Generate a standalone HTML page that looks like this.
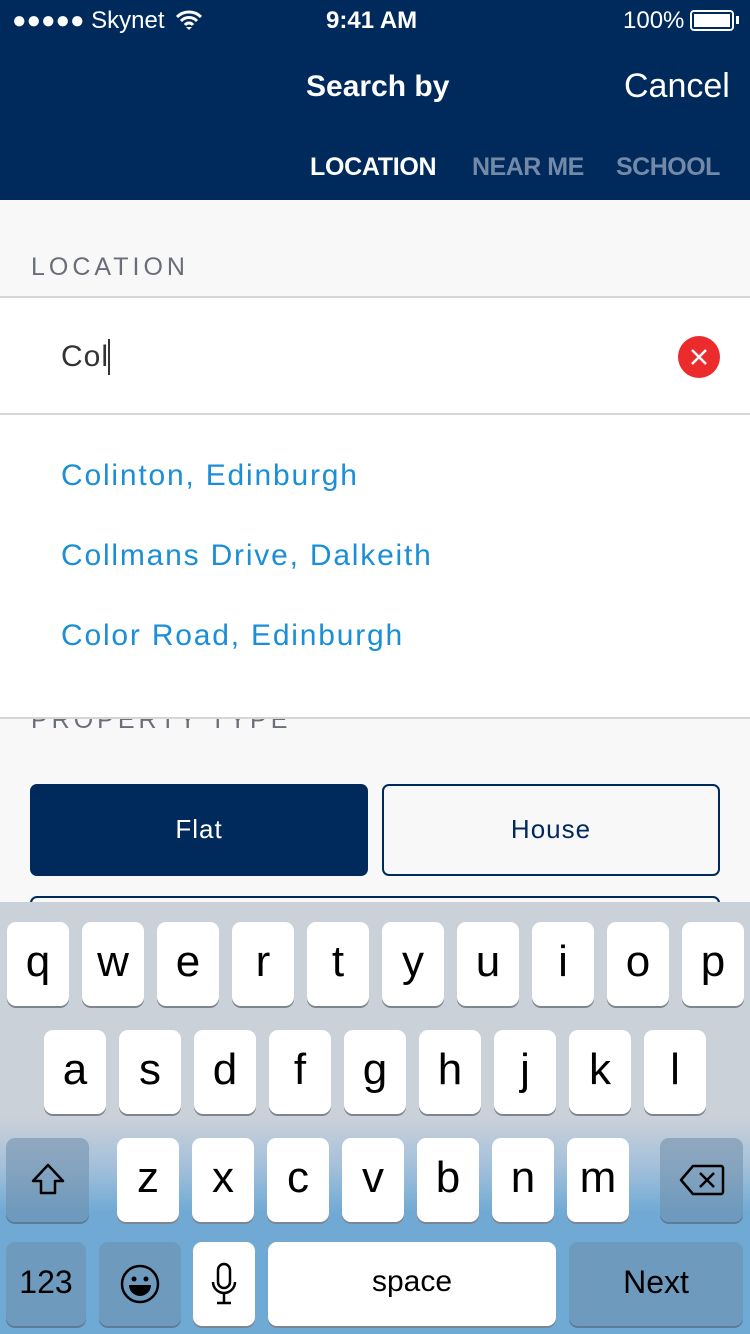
<!DOCTYPE html>
<html><head><meta charset="utf-8"><style>
*{margin:0;padding:0;box-sizing:border-box}
body{width:750px;height:1334px;overflow:hidden;position:relative;background:#f8f8f8;font-family:"Liberation Sans",sans-serif}
.a{position:absolute;white-space:nowrap}
.hdr{left:0;top:0;width:750px;height:200px;background:#012a5c}
.w{color:#fff}
.sug{color:#1b8ed8;font-size:30px;letter-spacing:1.8px;left:61px}
.kb{left:0;top:902px;width:750px;height:432px;background:linear-gradient(#cbd1d9 0,#cbd1d9 215px,#a3c0da 265px,#70aad4 310px,#6eaad4 432px)}
.k{position:absolute;width:62px;height:84px;background:#fff;border-radius:9px;box-shadow:0 2px 0 #7f8590;text-align:center;font-size:44px;line-height:80px;color:#000}
.d{background:rgba(110,140,170,0.55);box-shadow:0 2px 0 #5d7a96}
</style></head><body>
<div class="a hdr"></div>
<div class="a w" style="left:12px;top:7px;font-size:24px">●●●●● Skynet</div>
<svg class="a" style="left:176px;top:10px" width="26" height="20" viewBox="0 0 26 20"><path d="M1 7a17 17 0 0 1 24 0M5 11a11 11 0 0 1 16 0M9 15a5 5 0 0 1 8 0" stroke="#fff" stroke-width="3" fill="none"/><path d="M10 17l3 3 3-3z" fill="#fff"/></svg>
<div class="a w" style="left:326px;top:7px;font-size:24px;font-weight:bold">9:41 AM</div>
<div class="a w" style="left:623px;top:7px;font-size:24px">100%</div>
<div class="a" style="left:690px;top:10px;width:44px;height:21px;border:2px solid #fff;border-radius:4px;padding:2px"><div style="background:#fff;width:100%;height:100%"></div></div>
<div class="a" style="left:736px;top:16px;width:3px;height:8px;background:#fff"></div>
<div class="a w" style="left:306px;top:70px;font-size:30px;font-weight:bold">Search by</div>
<div class="a w" style="left:624px;top:67px;font-size:34px">Cancel</div>
<div class="a w" style="left:310px;top:153px;font-size:25px;font-weight:bold;letter-spacing:-0.3px">LOCATION</div>
<div class="a" style="left:472px;top:153px;font-size:25px;font-weight:bold;color:#7289a8;letter-spacing:-0.5px">NEAR ME</div>
<div class="a" style="left:616px;top:153px;font-size:25px;font-weight:bold;color:#7289a8;letter-spacing:-0.5px">SCHOOL</div>
<div class="a" style="left:31px;top:253px;font-size:25px;letter-spacing:4px;color:#6a6e78">LOCATION</div>
<div class="a" style="left:31px;top:706px;font-size:25px;letter-spacing:4px;color:#6a6e78">PROPERTY TYPE</div>
<div class="a" style="left:0;top:296px;width:750px;height:423px;background:#fff;border-top:2px solid #d6d6d6;border-bottom:2px solid #d6d6d6"></div>
<div class="a" style="left:0;top:413px;width:750px;height:2px;background:#d6d6d6"></div>
<div class="a" style="left:61px;top:340px;font-size:30px;color:#333;letter-spacing:1px">Col</div>
<div class="a" style="left:108px;top:339px;width:2px;height:36px;background:#333"></div>
<svg class="a" style="left:678px;top:336px" width="42" height="42"><circle cx="21" cy="21" r="21" fill="#ec2b2d"/><path d="M14 14l14 14M28 14l-14 14" stroke="#fff" stroke-width="2.5"/></svg>
<div class="a sug" style="top:459px">Colinton, Edinburgh</div>
<div class="a sug" style="top:539px">Collmans Drive, Dalkeith</div>
<div class="a sug" style="top:619px">Color Road, Edinburgh</div>
<div class="a" style="left:30px;top:784px;width:338px;height:92px;background:#012a5c;border-radius:7px;color:#fff;font-size:26px;text-align:center;line-height:90px;letter-spacing:1px">Flat</div>
<div class="a" style="left:382px;top:784px;width:338px;height:92px;border:2px solid #012a5c;border-radius:7px;color:#012a5c;font-size:26px;text-align:center;line-height:86px;letter-spacing:1px">House</div>
<div class="a" style="left:30px;top:896px;width:690px;height:20px;border:2px solid #012a5c;border-radius:7px"></div>
<div class="a kb">
<div class="k" style="left:7px;top:20px">q</div><div class="k" style="left:82px;top:20px">w</div><div class="k" style="left:157px;top:20px">e</div><div class="k" style="left:232px;top:20px">r</div><div class="k" style="left:307px;top:20px">t</div><div class="k" style="left:382px;top:20px">y</div><div class="k" style="left:457px;top:20px">u</div><div class="k" style="left:532px;top:20px">i</div><div class="k" style="left:607px;top:20px">o</div><div class="k" style="left:682px;top:20px">p</div>
<div class="k" style="left:44px;top:128px">a</div><div class="k" style="left:119px;top:128px">s</div><div class="k" style="left:194px;top:128px">d</div><div class="k" style="left:269px;top:128px">f</div><div class="k" style="left:344px;top:128px">g</div><div class="k" style="left:419px;top:128px">h</div><div class="k" style="left:494px;top:128px">j</div><div class="k" style="left:569px;top:128px">k</div><div class="k" style="left:644px;top:128px">l</div>
<div class="k d" style="left:6px;top:236px;width:83px"><svg width="40" height="40" viewBox="0 0 40 40" style="margin-top:22px"><path d="M20 5L5 21h8v12h14V21h8z" fill="none" stroke="#000" stroke-width="2.5" stroke-linejoin="round"/></svg></div>
<div class="k" style="left:117px;top:236px">z</div><div class="k" style="left:192px;top:236px">x</div><div class="k" style="left:267px;top:236px">c</div><div class="k" style="left:342px;top:236px">v</div><div class="k" style="left:417px;top:236px">b</div><div class="k" style="left:492px;top:236px">n</div><div class="k" style="left:567px;top:236px">m</div>
<div class="k d" style="left:660px;top:236px;width:83px"><svg width="48" height="34" viewBox="0 0 48 34" style="margin-top:25px"><path d="M15 3h28a2 2 0 0 1 2 2v24a2 2 0 0 1-2 2H15L3 17z" fill="none" stroke="#000" stroke-width="2.5" stroke-linejoin="round"/><path d="M22 10l14 14M36 10L22 24" stroke="#000" stroke-width="2.5"/></svg></div>
<div class="k d" style="left:6px;top:340px;width:80px;font-size:32px">123</div>
<div class="k d" style="left:99px;top:340px;width:82px"><svg width="42" height="42" viewBox="0 0 42 42" style="margin-top:21px"><circle cx="21" cy="21" r="18" fill="none" stroke="#000" stroke-width="2.5"/><circle cx="15" cy="16" r="2.5"/><circle cx="27" cy="16" r="2.5"/><path d="M10 22h22a11 11 0 0 1-22 0z"/></svg></div>
<div class="k" style="left:193px;top:340px"><svg width="26" height="44" viewBox="0 0 26 44" style="margin-top:20px"><rect x="7" y="2" width="12" height="24" rx="6" fill="none" stroke="#000" stroke-width="2.5"/><path d="M2 20a11 11 0 0 0 22 0M13 31v9M6 41h14" fill="none" stroke="#000" stroke-width="2.5"/></svg></div>
<div class="k" style="left:268px;top:340px;width:288px;font-size:30px">space</div>
<div class="k d" style="left:569px;top:340px;width:174px;font-size:32px">Next</div>
</div>
</body></html>
